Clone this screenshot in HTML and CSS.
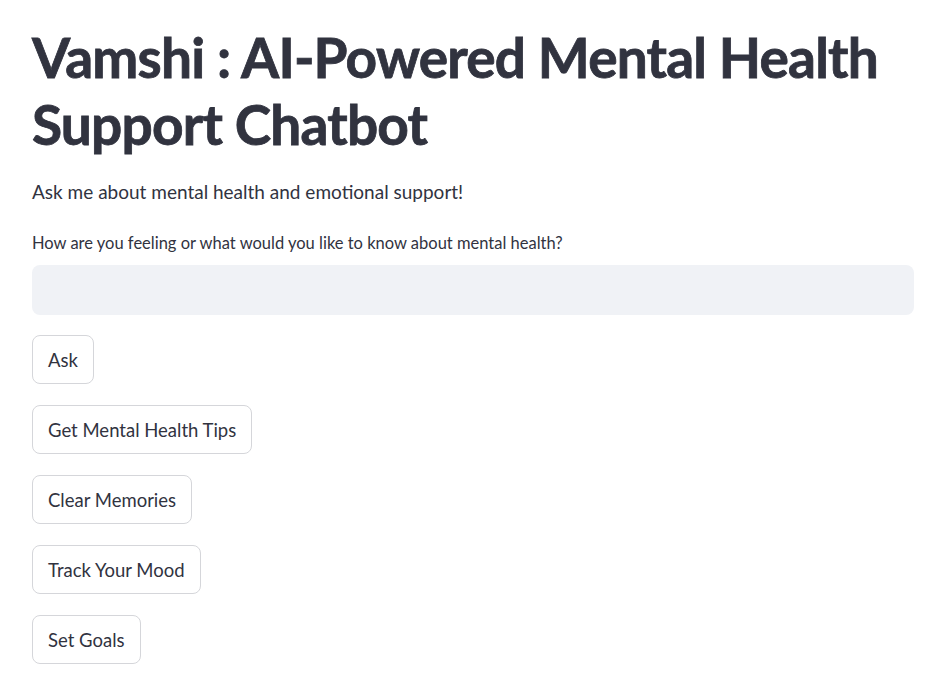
FILE: index.html
```html
<!DOCTYPE html>
<html lang="en">
<head>
  <meta charset="UTF-8">
  <meta name="viewport" content="width=device-width, initial-scale=1.0">
  <title>Vamshi : AI-Powered Mental Health Support Chatbot</title>
  <link rel="stylesheet" href="styles.css">
</head>
<body>
  <main class="app">
    <h1 class="title">Vamshi : AI-Powered Mental Health Support Chatbot</h1>
    <p class="intro">Ask me about mental health and emotional support!</p>

    <div class="field">
      <label class="field-label" for="question">How are you feeling or what would you like to know about mental health?</label>
      <input class="field-input" type="text" id="question">
    </div>

    <div class="actions">
      <button class="btn">Ask</button>
      <button class="btn">Get Mental Health Tips</button>
      <button class="btn">Clear Memories</button>
      <button class="btn">Track Your Mood</button>
      <button class="btn">Set Goals</button>
    </div>
  </main>
</body>
</html>
```

FILE: styles.css
```css
body {
  margin: 0;
  background: #ffffff;
  color: #31333f;
  font-family: Lato, "Open Sans", sans-serif;
}
.app {
  padding: 24px 37px 0 32px;
}
.title {
  margin: 0;
  font-size: 55px;
  font-weight: 700;
  line-height: 67px;
  letter-spacing: -0.8px;
  -webkit-text-stroke: 0.8px #31333f;
}
.intro {
  margin: 21px 0 0;
  font-size: 19px;
  line-height: 26px;
}
.field {
  margin-top: 28px;
}
.field-label {
  display: block;
  font-size: 16.5px;
  line-height: 20px;
  margin-bottom: 12px;
}
.field-input {
  display: block;
  box-sizing: border-box;
  width: 100%;
  height: 50px;
  border: none;
  border-radius: 8px;
  background: #f0f2f6;
  padding: 0 16px;
  font: inherit;
  outline: none;
}
.actions {
  display: flex;
  flex-direction: column;
  align-items: flex-start;
  gap: 21px;
  margin-top: 20px;
}
.btn {
  height: 49px;
  padding: 0 15px;
  border: 1px solid #d5d6da;
  border-radius: 8px;
  background: #ffffff;
  color: #31333f;
  font-family: inherit;
  font-size: 18.5px;
}
```
